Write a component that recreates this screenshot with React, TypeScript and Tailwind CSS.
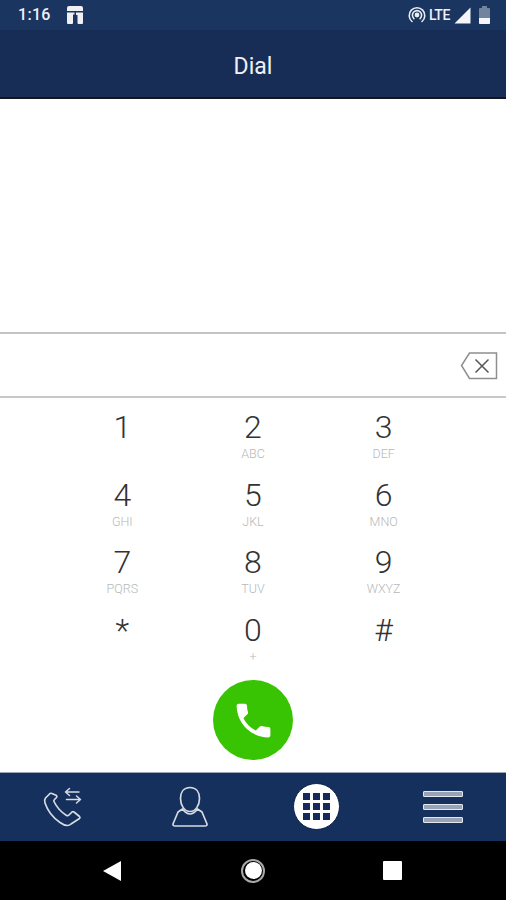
const keys = [
  ["1", ""],
  ["2", "ABC"],
  ["3", "DEF"],
  ["4", "GHI"],
  ["5", "JKL"],
  ["6", "MNO"],
  ["7", "PQRS"],
  ["8", "TUV"],
  ["9", "WXYZ"],
  ["*", ""],
  ["0", "+"],
  ["#", ""],
];

function CarrierIcon() {
  return (
    <svg width="18" height="20" viewBox="0 0 18 20" fill="#eef0f4">
      <path d="M1 3 Q1 1 3 1 H15 Q17 1 17 3 V6 H1 Z" />
      <path d="M1 7.5 H8.5 V9.5 H7 V18 Q7 19 6 19 H2 Q1 19 1 18 Z" />
      <path d="M10 7.5 H17 V18 Q17 19 16 19 H12.5 Q11.5 19 11.5 18 V10 H10 Z" />
    </svg>
  );
}

function HotspotIcon() {
  return (
    <svg width="18" height="18" viewBox="0 0 18 18" fill="none" stroke="#e8ecf3" strokeWidth="1.6" strokeLinecap="round">
      <path d="M4 15.5 A7.8 7.8 0 1 1 14 15.5" />
      <path d="M5.9 12.6 A4.6 4.6 0 1 1 12.1 12.6" />
      <circle cx="9" cy="9" r="1.6" fill="#e8ecf3" />
    </svg>
  );
}

function SignalIcon() {
  return (
    <svg width="17" height="17" viewBox="0 0 17 17">
      <path d="M16.5 0.5 V16.5 H0.5 Z" fill="#f4f6f9" />
    </svg>
  );
}

function BatteryIcon() {
  return (
    <div className="flex h-[18px] w-[11px] flex-col items-center">
      <div className="h-[2px] w-[5px] bg-[#72839f]" />
      <div className="flex flex-1 w-full flex-col justify-end rounded-[1px] bg-[#72839f]">
        <div className="h-[6px] w-full rounded-b-[1px] bg-[#f4f6f9]" />
      </div>
    </div>
  );
}

function BackspaceIcon() {
  return (
    <svg width="38" height="28" viewBox="0 0 38 28" fill="none" stroke="#8f8f8f" strokeWidth="1.5">
      <path d="M9.5 1 H36.5 V26.5 H9.5 L1.5 13.5 Z" />
      <path d="M15.5 7.5 L28.5 20.5 M28.5 7.5 L15.5 20.5" stroke="#555555" />
    </svg>
  );
}

function PhoneIcon() {
  return (
    <svg width="45" height="45" viewBox="0 0 24 24" fill="#ffffff">
      <path d="M6.62 10.79c1.44 2.83 3.76 5.14 6.59 6.59l2.2-2.2c.27-.27.67-.36 1.02-.24 1.12.37 2.33.57 3.57.57.55 0 1 .45 1 1V20c0 .55-.45 1-1 1-9.39 0-17-7.61-17-17 0-.55.45-1 1-1h3.5c.55 0 1 .45 1 1 0 1.25.2 2.45.57 3.57.11.35.03.74-.25 1.02l-2.2 2.2z" />
    </svg>
  );
}

function CallsIcon() {
  return (
    <svg width="40" height="42" viewBox="0 0 40 42" fill="none" stroke="#d5dae3" strokeWidth="1.7" strokeLinejoin="round" strokeLinecap="round">
      <path d="M7 7.5 L2.5 12 Q1 14 2 17 Q6 29 17 36.5 Q21 39.5 24.5 39.5 Q26.5 39.5 28 38 L36.5 32.5 Q37.5 31.5 36.5 30.5 L31 26 Q30 25.3 29 26 L26 29 Q25 30 23.5 29.5 Q15 24 11 15.5 Q10.5 14.5 11.5 13.5 L13.5 11.5 Q14.2 10.5 13.5 9.5 L9 7.5 Q8 7 7 7.5 Z" />
      <path d="M36 6 H22.5 M26.5 2.5 L22.5 6 L26.5 9.5" strokeWidth="1.5" />
      <path d="M23.5 13.5 H37.5 M33.5 10 L37.5 13.5 L33.5 17" strokeWidth="1.5" />
    </svg>
  );
}

function ContactIcon() {
  return (
    <svg width="36" height="42" viewBox="0 0 36 42" fill="none" stroke="#d5dae3" strokeWidth="1.7" strokeLinejoin="round">
      <path d="M18 1.5 C24.5 1.5 27.5 6.5 27.5 12.5 C27.5 19.5 23.5 25.5 18 25.5 C12.5 25.5 8.5 19.5 8.5 12.5 C8.5 6.5 11.5 1.5 18 1.5 Z" />
      <path d="M10.5 23 L6 26 L1 38 Q0.8 40 3 40 H33 Q35.2 40 35 38 L30 26 L25.5 23 Q18 33 10.5 23 Z" />
    </svg>
  );
}

function MenuIcon() {
  return (
    <div className="flex w-10 flex-col gap-[7px]">
      <div className="h-[6px] rounded-[1px] border border-[#e4e7ed] bg-[#98a3b8]" />
      <div className="h-[6px] rounded-[1px] border border-[#e4e7ed] bg-[#98a3b8]" />
      <div className="h-[6px] rounded-[1px] border border-[#e4e7ed] bg-[#98a3b8]" />
    </div>
  );
}

function DialpadIcon() {
  return (
    <div className="flex h-[47px] w-[47px] items-center justify-center rounded-full border border-[#0d1f47] bg-white">
      <div className="grid grid-cols-3 gap-[3px]">
        {Array.from({ length: 9 }).map((_, i) => (
          <div key={i} className="h-[7px] w-[7px] bg-[#15295a]" />
        ))}
      </div>
    </div>
  );
}

export default function App() {
  return (
    <div className="flex h-[900px] w-[506px] flex-col overflow-hidden bg-white font-['Roboto',sans-serif]">
      {/* status bar */}
      <div className="flex h-[30px] items-center bg-[#1a3560] pl-[18px] pr-[16px] text-[#eef1f6]">
        <span className="text-[16px] font-medium leading-none tracking-[0.3px]">1:16</span>
        <div className="ml-[15px]">
          <CarrierIcon />
        </div>
        <div className="ml-auto flex items-center">
          <HotspotIcon />
          <span className="ml-[3px] w-[23px] text-[14px] font-medium leading-none tracking-[-0.5px]">LTE</span>
          <div className="ml-[2px]">
            <SignalIcon />
          </div>
          <div className="ml-[8px]">
            <BatteryIcon />
          </div>
        </div>
      </div>

      {/* app bar */}
      <div className="flex h-[67px] items-center justify-center bg-[#172d55] pt-[7px] text-[23px] text-[#eef1f6]">
        Dial
      </div>
      <div className="h-[2px] bg-[#15161b]" />

      {/* call list area */}
      <div className="h-[235px] border-b-2 border-[#c4c4c4]" />

      {/* number input */}
      <div className="flex h-[62px] items-center justify-end pr-[8px] pt-[2px]">
        <BackspaceIcon />
      </div>
      <div className="h-[2px] bg-[#c8c8c8]" />

      {/* keypad */}
      <div className="mx-[57px] grid grid-cols-3 pt-[8px]">
        {keys.map(([digit, letters]) => (
          <div key={digit} className="flex h-[67.5px] flex-col items-center">
            <span className="h-[41px] text-[32px] font-light leading-[42px] text-[#333333]">{digit}</span>
            <span className="text-[12.5px] font-light leading-[13px] text-[#b8b8b8]">{letters}</span>
          </div>
        ))}
      </div>

      {/* call button */}
      <div className="flex justify-center pt-[4px]">
        <div className="flex h-[80px] w-[80px] items-center justify-center rounded-full bg-[#38c403]">
          <PhoneIcon />
        </div>
      </div>

      {/* bottom nav */}
      <div className="mt-auto grid h-[69px] grid-cols-4 border-t border-[#9aa5b8] bg-[#15305c] pb-[1px]">
        <div className="flex items-center justify-center"><CallsIcon /></div>
        <div className="flex items-center justify-center"><ContactIcon /></div>
        <div className="flex items-center justify-center"><DialpadIcon /></div>
        <div className="flex items-center justify-center"><MenuIcon /></div>
      </div>

      {/* android nav */}
      <div className="grid h-[59px] shrink-0 grid-cols-[228px_50px_228px] items-center bg-black">
        <div className="flex justify-end pr-[106px]">
          <svg width="20" height="22" viewBox="0 0 20 22">
            <path d="M19 1 V21 L1 11 Z" fill="#ffffff" />
          </svg>
        </div>
        <div className="flex justify-center">
          <div className="flex h-[24px] w-[24px] items-center justify-center rounded-full border-2 border-[#a8a8a8]">
            <div className="h-[17px] w-[17px] rounded-full bg-white" />
          </div>
        </div>
        <div className="pl-[105px]">
          <div className="h-[19px] w-[19px] rounded-[1px] bg-white" />
        </div>
      </div>
    </div>
  );
}
